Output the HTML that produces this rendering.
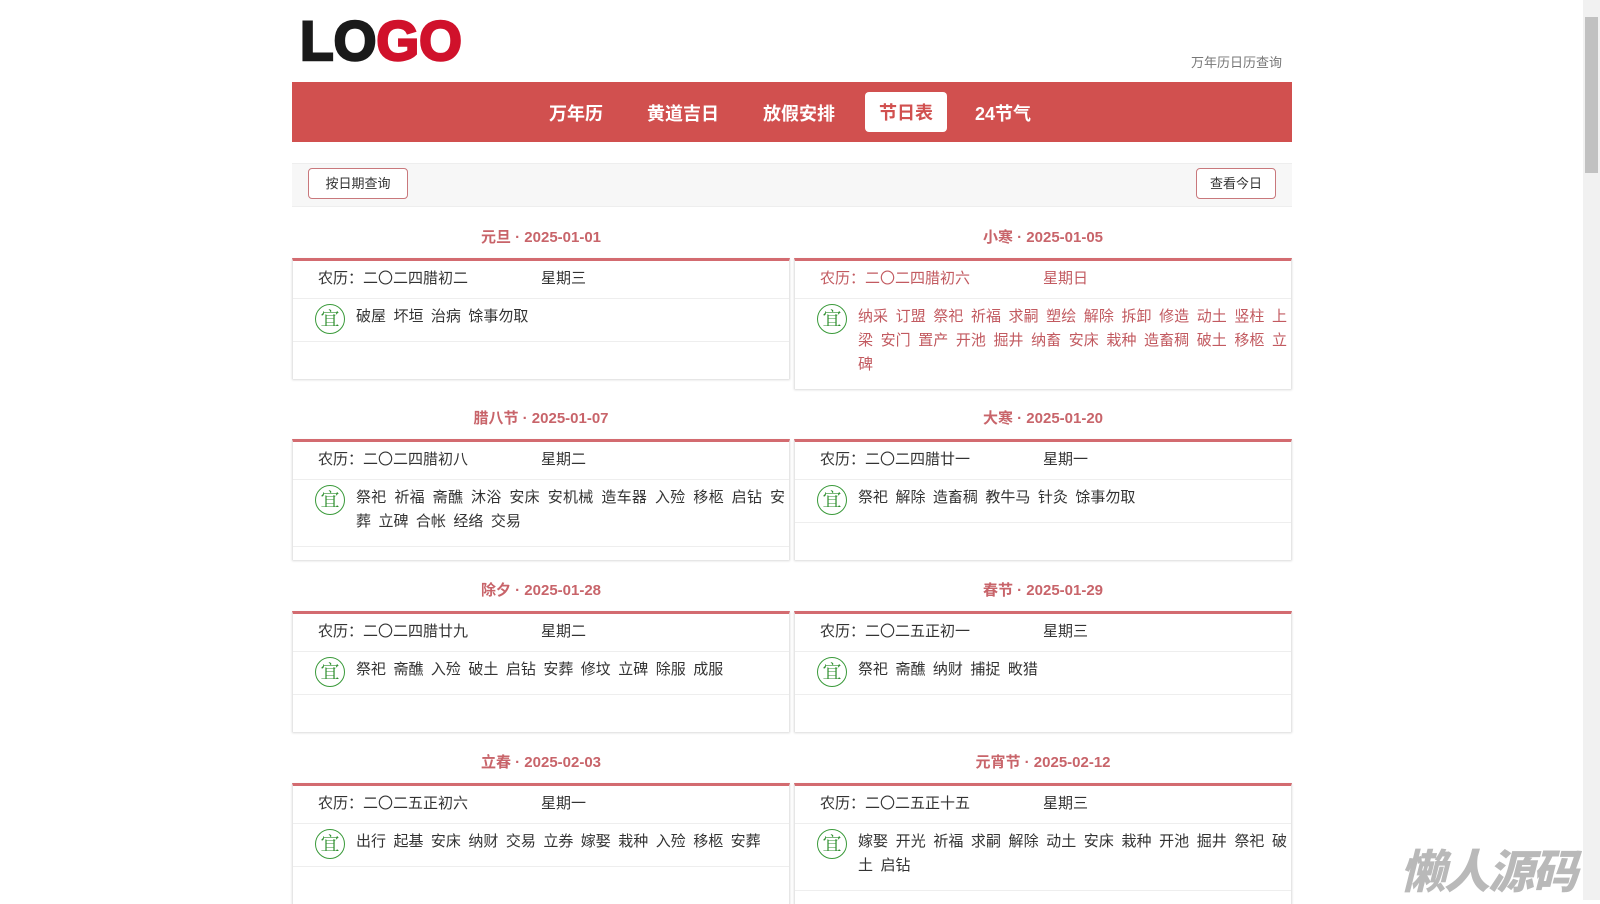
<!DOCTYPE html>
<html><head><meta charset="utf-8"><style>
*{margin:0;padding:0;box-sizing:border-box}
html,body{width:1600px;height:900px;overflow:hidden;background:#fff;font-family:"Liberation Sans","Noto Sans CJK SC",sans-serif;color:#333}
.wrap{position:absolute;left:292px;top:0;width:1000px}
.tag{position:absolute;right:10px;top:52px;font-size:13px;color:#777}
.nav{position:absolute;left:0;top:82px;width:1000px;height:60px;background:#d1504f}
.nav a{position:absolute;top:2px;line-height:60px;font-size:18px;font-weight:bold;color:#fff;text-decoration:none;transform:translateX(-50%);white-space:nowrap}
.nav a.on{top:10px;height:40px;line-height:42px;background:#fff;color:#d1504f;border-radius:4px;width:82px;text-align:center}
.bar{position:absolute;left:0;top:163px;width:1000px;height:44px;background:#f7f7f7;border-top:1px solid #eee;border-bottom:1px solid #eee}
.btn{position:absolute;top:4px;height:31px;line-height:29px;border:1px solid #c9787c;border-radius:4px;background:#fff;font-size:13px;text-align:center;color:#333}
.sec{position:absolute;left:0;width:1000px;display:flex;justify-content:space-between;align-items:flex-start}
.col{width:498px}
.tt{height:51px;padding-top:10px;line-height:42px;text-align:center;font-size:15px;font-weight:bold;color:#c8646a}
.card{border-top:3px solid #d36b70;border-left:1px solid #e6e6e6;border-right:1px solid #e6e6e6;box-shadow:0 1px 2px rgba(0,0,0,.15);min-height:121px;display:flex;flex-direction:column;background:#fff}
.r1{height:38px;border-bottom:1px solid #eee;line-height:35px;font-size:15px;padding-left:25px;position:relative}
.r1 .w{position:absolute;left:248px;top:0}
.r2{border-bottom:1px solid #eee;padding:6px 4px 12px 63px;position:relative;font-size:15px;word-spacing:3.3px;line-height:24px;text-align:justify;word-break:break-all}
.yi{position:absolute;left:22px;top:5px;width:30px;height:30px;border:1.5px solid #3a9a3a;border-radius:50%;color:#2f8f2f;font-size:19px;line-height:26px;text-align:center;font-family:"Noto Serif CJK SC",serif;word-spacing:0}
.r3{flex:1}
.red{color:#c25a60}
.sb{position:absolute;left:1583px;top:0;width:17px;height:900px;background:#f1f1f1}
.th{position:absolute;left:1585px;top:17px;width:13px;height:156px;background:#c1c1c1}
.wm{position:absolute;left:1400px;top:836px;font-size:46px;font-weight:900;font-style:italic;color:#b9b9b9;letter-spacing:-2px}
</style></head><body>
<div class="wrap">
<svg style="position:absolute;left:8px;top:14px" width="170" height="50"><text x="0" y="46" font-family="Liberation Sans" font-weight="bold" font-size="56" textLength="162" lengthAdjust="spacingAndGlyphs" stroke-width="2.5" ><tspan fill="#1a1a1a" stroke="#1a1a1a">LO</tspan><tspan fill="#d0112b" stroke="#d0112b">GO</tspan></text></svg>
<div class="tag">万年历日历查询</div>
<div class="nav">
<a style="left:284px">万年历</a><a style="left:391px">黄道吉日</a><a style="left:507px">放假安排</a><a class="on" style="left:614px">节日表</a><a style="left:711px">24节气</a>
</div>
<div class="bar"><div class="btn" style="left:16px;width:100px">按日期查询</div><div class="btn" style="left:904px;width:80px">查看今日</div></div>

<div class="sec" style="top:207px">
<div class="col"><div class="tt">元旦 · 2025-01-01</div><div class="card"><div class="r1">农历：二〇二四腊初二<span class="w">星期三</span></div><div class="r2"><span class="yi">宜</span>破屋 坏垣 治病 馀事勿取</div><div class="r3"></div></div></div>
<div class="col"><div class="tt">小寒 · 2025-01-05</div><div class="card" style="min-height:130px"><div class="r1 red">农历：二〇二四腊初六<span class="w">星期日</span></div><div class="r2 red" style="border-bottom:0"><span class="yi">宜</span>纳采 订盟 祭祀 祈福 求嗣 塑绘 解除 拆卸 修造 动土 竖柱 上梁 安门 置产 开池 掘井 纳畜 安床 栽种 造畜稠 破土 移柩 立碑</div><div class="r3"></div></div></div>
</div>

<div class="sec" style="top:388px">
<div class="col"><div class="tt">腊八节 · 2025-01-07</div><div class="card"><div class="r1">农历：二〇二四腊初八<span class="w">星期二</span></div><div class="r2"><span class="yi">宜</span>祭祀 祈福 斋醮 沐浴 安床 安机械 造车器 入殓 移柩 启钻 安葬 立碑 合帐 经络 交易</div><div class="r3"></div></div></div>
<div class="col"><div class="tt">大寒 · 2025-01-20</div><div class="card"><div class="r1">农历：二〇二四腊廿一<span class="w">星期一</span></div><div class="r2"><span class="yi">宜</span>祭祀 解除 造畜稠 教牛马 针灸 馀事勿取</div><div class="r3"></div></div></div>
</div>

<div class="sec" style="top:560px">
<div class="col"><div class="tt">除夕 · 2025-01-28</div><div class="card"><div class="r1">农历：二〇二四腊廿九<span class="w">星期二</span></div><div class="r2"><span class="yi">宜</span>祭祀 斋醮 入殓 破土 启钻 安葬 修坟 立碑 除服 成服</div><div class="r3"></div></div></div>
<div class="col"><div class="tt">春节 · 2025-01-29</div><div class="card"><div class="r1">农历：二〇二五正初一<span class="w">星期三</span></div><div class="r2"><span class="yi">宜</span>祭祀 斋醮 纳财 捕捉 畋猎</div><div class="r3"></div></div></div>
</div>

<div class="sec" style="top:732px">
<div class="col"><div class="tt">立春 · 2025-02-03</div><div class="card"><div class="r1">农历：二〇二五正初六<span class="w">星期一</span></div><div class="r2"><span class="yi">宜</span>出行 起基 安床 纳财 交易 立券 嫁娶 栽种 入殓 移柩 安葬</div><div class="r3"></div></div></div>
<div class="col"><div class="tt">元宵节 · 2025-02-12</div><div class="card"><div class="r1">农历：二〇二五正十五<span class="w">星期三</span></div><div class="r2"><span class="yi">宜</span>嫁娶 开光 祈福 求嗣 解除 动土 安床 栽种 开池 掘井 祭祀 破土 启钻</div><div class="r3"></div></div></div>
</div>
</div>
<div class="wm">懒人源码</div>
<div class="sb"></div><div class="th"></div>
</body></html>
